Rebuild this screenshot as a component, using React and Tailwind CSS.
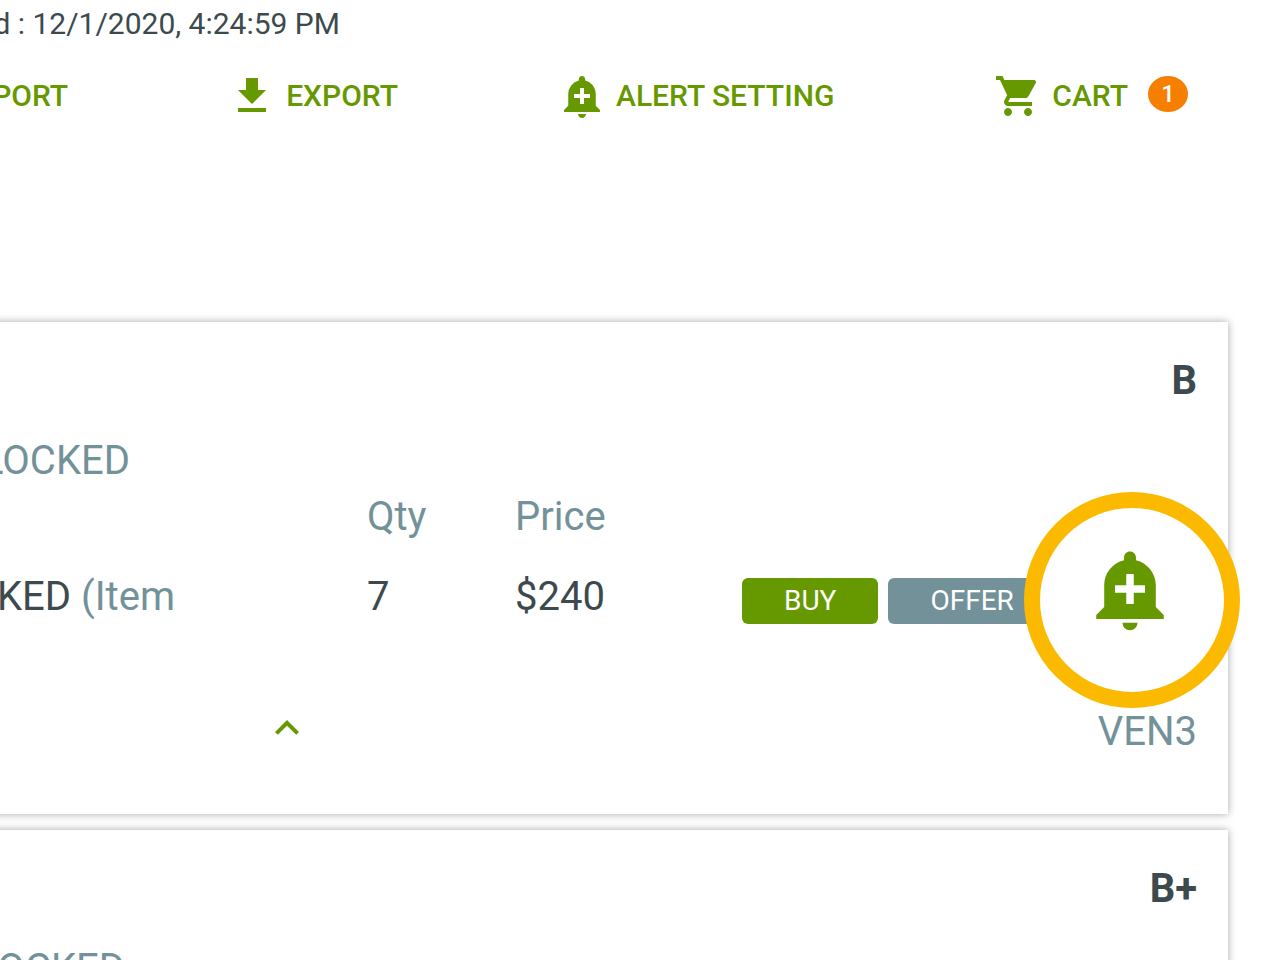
import { MdAddAlert, MdGetApp, MdKeyboardArrowUp, MdShoppingCart } from "react-icons/md";

const NavButton = ({ icon: Icon, label, badge }) => (
  <button className="flex items-center gap-2.5 text-[30px] leading-9 font-medium text-[#669900] whitespace-nowrap">
    {Icon && <Icon size={48} />}
    {label}
    {badge && (
      <span className="ml-2.5 mb-1 flex h-9 w-10 items-center justify-center rounded-[50%] bg-[#f77f00] text-2xl text-white">
        {badge}
      </span>
    )}
  </button>
);

const ItemCard = ({ grade, title, titleWidth, children }) => (
  <article className="relative -ml-2 min-h-[492px] bg-white pt-[39px] pr-[31px] pl-2 shadow-[0_0_8px_rgba(0,0,0,0.35)]">
    <p className="text-right font-bold text-[#3c4a4e]">{grade}</p>
    <h2 className={`mt-10 flex justify-end whitespace-nowrap ${titleWidth}`}>{title}</h2>
    {children}
  </article>
);

const Offers = () => (
  <table className="mt-4 w-full table-fixed text-left whitespace-nowrap">
    <thead>
      <tr>
        <td className="w-[367px]" />
        <th className="w-[148px] font-normal">Qty</th>
        <th className="w-[227px] font-normal">Price</th>
        <td />
      </tr>
    </thead>
    <tbody>
      <tr className="align-baseline text-[#3c4a4e]">
        <td className="pt-10">
          <div className="flex w-[175px] justify-end gap-2.5">
            <span>KED</span>
            <span className="text-[#739199]">(Item</span>
          </div>
        </td>
        <td className="pt-10">7</td>
        <td className="pt-10">$240</td>
        <td className="pt-10">
          <div className="flex gap-2.5 text-[28px] leading-[46px] text-white">
            <button className="rounded-md bg-[#669900] px-[42px]">BUY</button>
            <button className="rounded-md bg-[#739199] px-[42px]">OFFER</button>
          </div>
        </td>
      </tr>
    </tbody>
  </table>
);

export default function App() {
  return (
    <div className="h-screen overflow-hidden bg-white font-[Roboto,sans-serif]">
      <header className="pt-2">
        <p className="flex w-[340px] justify-end text-[30px] leading-8 text-[#3c4a4e] whitespace-nowrap">
          d : 12/1/2020, 4:24:59 PM
        </p>
        <nav className="mt-8 flex justify-end gap-40 pr-[92px]">
          <NavButton label="PORT" />
          <NavButton icon={MdGetApp} label="EXPORT" />
          <NavButton icon={MdAddAlert} label="ALERT SETTING" />
          <NavButton icon={MdShoppingCart} label="CART" badge={1} />
        </nav>
      </header>

      <main className="mt-[202px] mr-[52px] flex flex-col gap-4 text-[40px] leading-10 text-[#739199]">
        <ItemCard grade="B" title="LOCKED" titleWidth="w-[130px]">
          <Offers />
          <footer className="mt-20 flex items-end justify-between pl-[263px]">
            <button aria-label="Collapse" className="text-[#669900]">
              <MdKeyboardArrowUp size={48} />
            </button>
            <span>VEN3</span>
          </footer>

          {/* Highlighted alert button */}
          <button
            aria-label="Add alert"
            className="absolute top-[170px] -right-3 flex size-[216px] items-center justify-center rounded-full border-16 border-[#fbb900] bg-white pr-1 pb-[22px] text-[#669900]"
          >
            <MdAddAlert size={90} />
          </button>
        </ItemCard>

        <ItemCard grade="B+" title="OCKED" titleWidth="w-[125px]" />
      </main>
    </div>
  );
}
